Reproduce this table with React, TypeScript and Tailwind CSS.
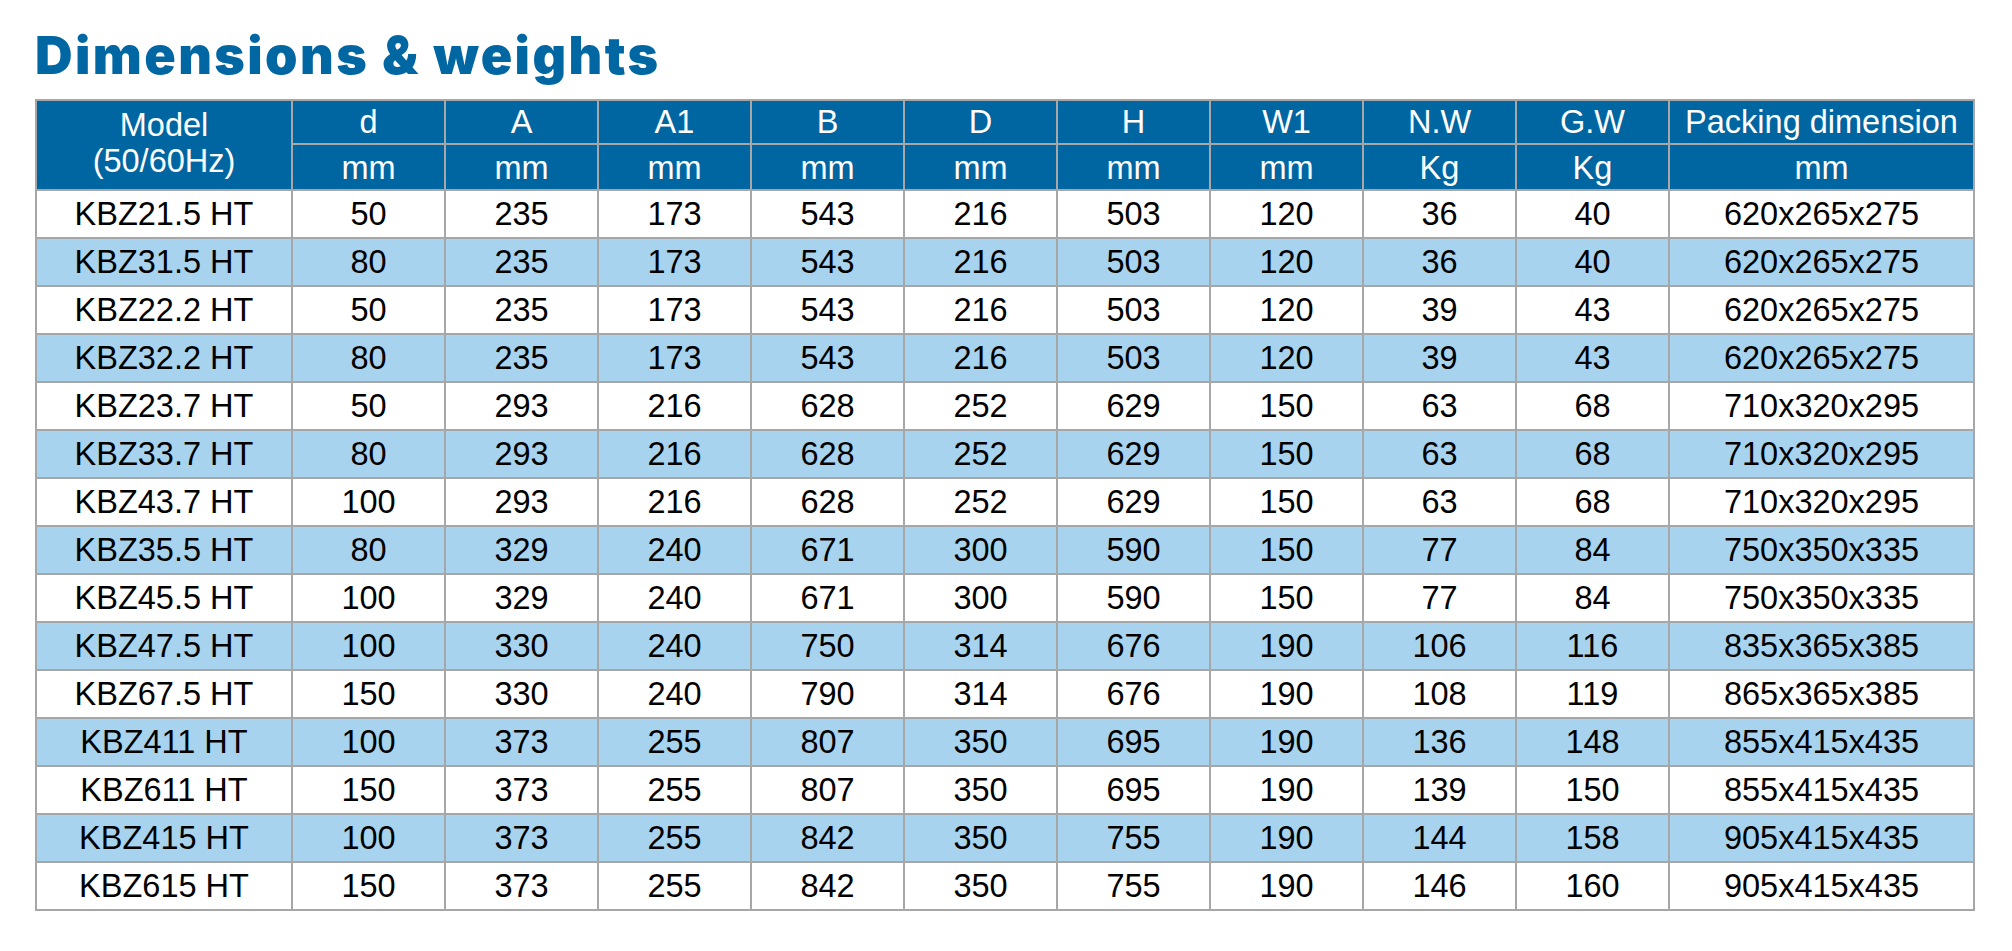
import React from "react";

const rows: string[][] = [
  ["KBZ21.5 HT", "50", "235", "173", "543", "216", "503", "120", "36", "40", "620x265x275"],
  ["KBZ31.5 HT", "80", "235", "173", "543", "216", "503", "120", "36", "40", "620x265x275"],
  ["KBZ22.2 HT", "50", "235", "173", "543", "216", "503", "120", "39", "43", "620x265x275"],
  ["KBZ32.2 HT", "80", "235", "173", "543", "216", "503", "120", "39", "43", "620x265x275"],
  ["KBZ23.7 HT", "50", "293", "216", "628", "252", "629", "150", "63", "68", "710x320x295"],
  ["KBZ33.7 HT", "80", "293", "216", "628", "252", "629", "150", "63", "68", "710x320x295"],
  ["KBZ43.7 HT", "100", "293", "216", "628", "252", "629", "150", "63", "68", "710x320x295"],
  ["KBZ35.5 HT", "80", "329", "240", "671", "300", "590", "150", "77", "84", "750x350x335"],
  ["KBZ45.5 HT", "100", "329", "240", "671", "300", "590", "150", "77", "84", "750x350x335"],
  ["KBZ47.5 HT", "100", "330", "240", "750", "314", "676", "190", "106", "116", "835x365x385"],
  ["KBZ67.5 HT", "150", "330", "240", "790", "314", "676", "190", "108", "119", "865x365x385"],
  ["KBZ411 HT", "100", "373", "255", "807", "350", "695", "190", "136", "148", "855x415x435"],
  ["KBZ611 HT", "150", "373", "255", "807", "350", "695", "190", "139", "150", "855x415x435"],
  ["KBZ415 HT", "100", "373", "255", "842", "350", "755", "190", "144", "158", "905x415x435"],
  ["KBZ615 HT", "150", "373", "255", "842", "350", "755", "190", "146", "160", "905x415x435"],
];

const heads = ["d", "A", "A1", "B", "D", "H", "W1", "N.W", "G.W", "Packing dimension"];
const units = ["mm", "mm", "mm", "mm", "mm", "mm", "mm", "Kg", "Kg", "mm"];

export default function App() {
  return (
    <div className="w-[2012px] h-[951px] bg-white pt-[30px] pl-[35px]">
      <h1
        className="text-[52px] leading-[52px] font-black text-[#0067a2] tracking-[2.4px]"
        style={{ fontFamily: "Inter, 'Liberation Sans', sans-serif" }}
      >
        Dimensions &amp; weights
      </h1>
      <div
        className="mt-[17px] w-[1940px] grid grid-cols-[254px_repeat(9,151px)_303px] grid-rows-[42px_44px_repeat(15,46px)] gap-[2px] p-[2px] bg-[#a7a7a7] text-[32.5px]"
        style={{ fontFamily: "'Liberation Sans', Arial, sans-serif" }}
      >
        <div className="row-span-2 bg-[#0066a1] text-white flex flex-col items-center justify-center leading-[36px] pb-[4px]">
          <span>Model</span>
          <span>(50/60Hz)</span>
        </div>
        {heads.map((h) => (
          <div key={h} className="bg-[#0066a1] text-white flex items-center justify-center leading-none whitespace-nowrap">
            {h}
          </div>
        ))}
        {units.map((u, i) => (
          <div key={i} className="bg-[#0066a1] text-white flex items-center justify-center leading-none pt-[2px]">
            {u}
          </div>
        ))}
        {rows.map((r, ri) =>
          r.map((c, ci) => (
            <div
              key={ri + "-" + ci}
              className={
                "flex items-center justify-center leading-none text-black " +
                (ri % 2 === 1 ? "bg-[#a8d3ee]" : "bg-white")
              }
            >
              {c}
            </div>
          ))
        )}
      </div>
    </div>
  );
}
